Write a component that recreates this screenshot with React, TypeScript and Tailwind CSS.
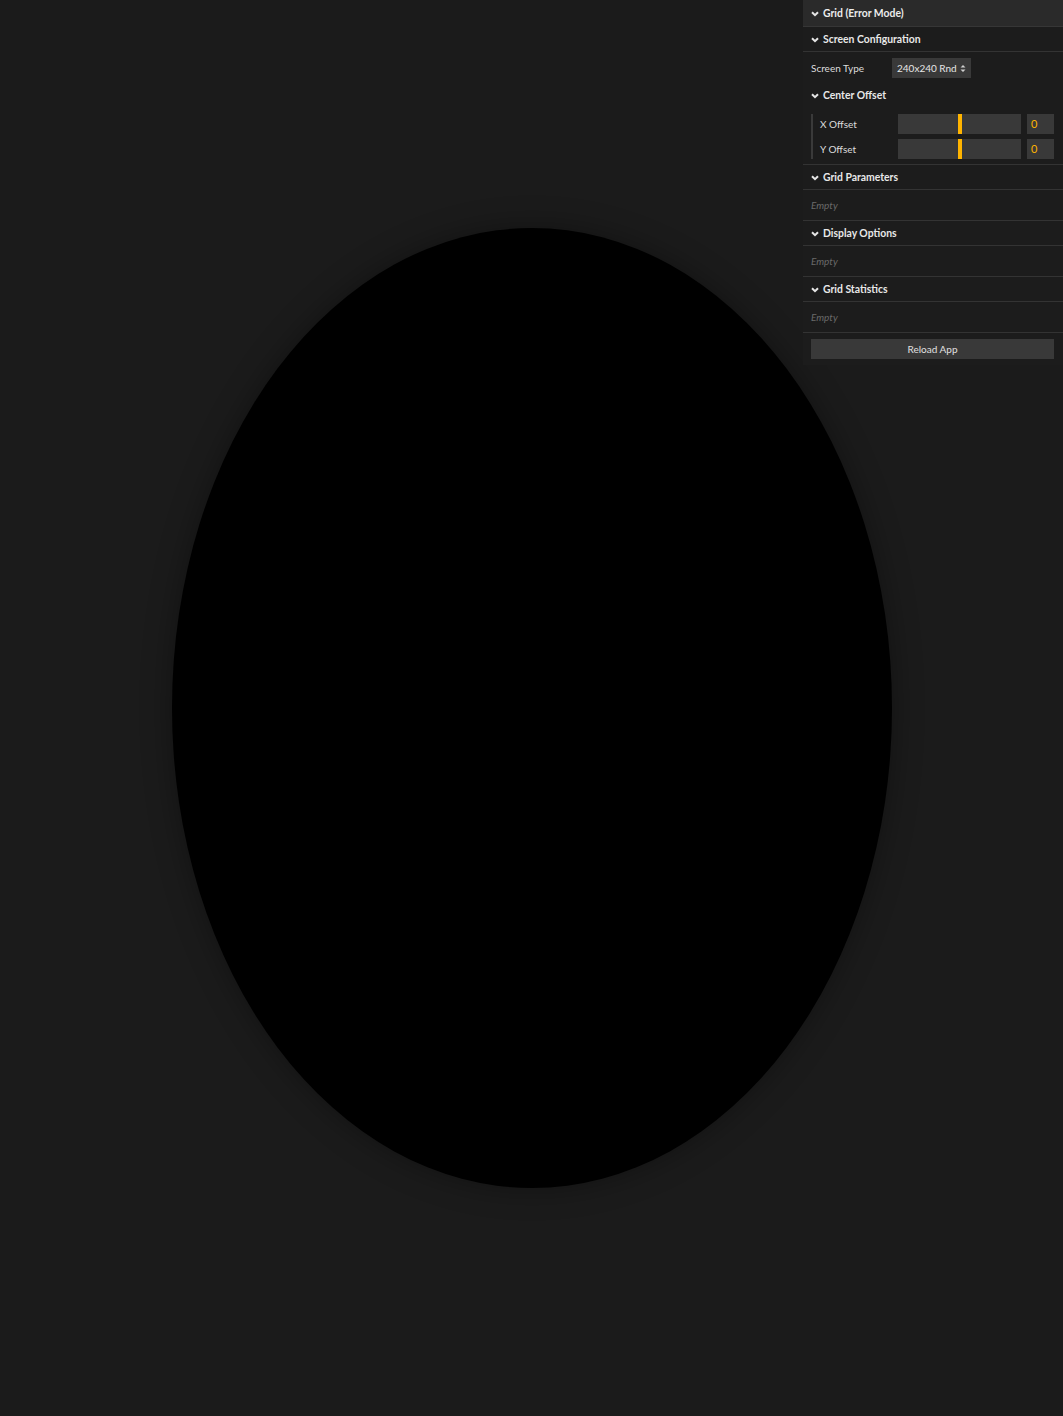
import React from "react";

const font = { fontFamily: 'Lato, "Noto Sans", Arial, sans-serif' };

const Chevron = () => (
  <svg width="8" height="6" viewBox="0 0 8 6" className="shrink-0">
    <path d="M1 1.2 L4 4.2 L7 1.2" stroke="#e6e6e6" strokeWidth="2" fill="none" />
  </svg>
);

const FolderHeader = ({ title, border = true }: { title: string; border?: boolean }) => (
  <div
    className={
      "h-[25px] flex items-center gap-[4px] pl-[8px] pt-[1px] text-[10.4px] font-bold text-[#e8e8e8] " +
      (border ? "border-b border-[#333333]" : "")
    }
  >
    <Chevron />
    <span>{title}</span>
  </div>
);

const EmptyRow = () => (
  <div className="h-[31px] flex items-center pl-[8px] text-[10px] italic text-[#6a6a6a] border-b border-[#333333]">
    Empty
  </div>
);

const SliderRow = ({ label }: { label: string }) => (
  <div className="h-[20px] flex items-center">
    <span className="w-[78px] text-[10px] text-[#dcdcdc]">{label}</span>
    <div className="relative h-[20px] w-[123px] bg-[#393939]">
      <div className="absolute top-0 left-[60px] h-[20px] w-[4px] bg-[#ffb400]" />
    </div>
    <div className="ml-[6px] h-[20px] w-[27px] bg-[#393939] flex items-center pl-[4px] text-[11px] text-[#ffb400]">
      0
    </div>
  </div>
);

export default function App() {
  return (
    <div className="relative h-screen w-full bg-[#1b1b1b] flex items-center justify-center overflow-hidden" style={font}>
      <div className="w-[720px] h-[960px] rounded-[50%] bg-black shadow-[0_0_30px_rgba(0,0,0,0.35)]" />

      <div className="absolute top-0 right-0 w-[260px] bg-[#1c1c1c]">
        <div className="h-[27px] flex items-center gap-[4px] pl-[8px] pt-[1px] bg-[#2a2a2a] border-b border-[#363636] text-[10.4px] font-bold text-[#ececec]">
          <Chevron />
          <span>Grid (Error Mode)</span>
        </div>

        <FolderHeader title="Screen Configuration" />
        <div className="pt-[6px] pb-[5px] border-b border-[#333333]">
          <div className="h-[20px] flex items-center pl-[8px]">
            <span className="w-[81px] text-[10px] text-[#dcdcdc]">Screen Type</span>
            <div className="h-[20px] w-[79px] bg-[#393939] flex items-center justify-between pl-[5px] pr-[5px] text-[10px] text-[#e6e6e6]">
              <span>240x240 Rnd</span>
              <svg width="6" height="9" viewBox="0 0 6 9">
                <path d="M0.5 3.5 L3 1 L5.5 3.5 Z M0.5 5.5 L3 8 L5.5 5.5 Z" fill="#d0d0d0" />
              </svg>
            </div>
          </div>
          <div className="mt-[5px]">
            <FolderHeader title="Center Offset" border={false} />
          </div>
          <div className="ml-[8px] mt-[6px] border-l-2 border-[#3a3a3a] pl-[7px] flex flex-col gap-[5px]">
            <SliderRow label="X Offset" />
            <SliderRow label="Y Offset" />
          </div>
        </div>

        <FolderHeader title="Grid Parameters" />
        <EmptyRow />
        <FolderHeader title="Display Options" />
        <EmptyRow />
        <FolderHeader title="Grid Statistics" />
        <EmptyRow />

        <div className="pt-[6px] pb-[6px] pl-[8px] pr-[9px]">
          <button className="h-[20px] w-full bg-[#393939] text-[10px] text-[#e0e0e0] flex items-center justify-center">
            Reload App
          </button>
        </div>
      </div>
    </div>
  );
}
